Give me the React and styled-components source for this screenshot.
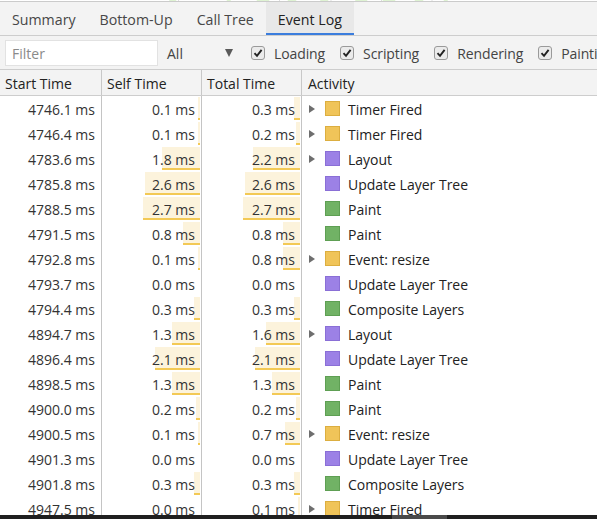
import React from "react";
import styled, { createGlobalStyle } from "styled-components";

const Global = createGlobalStyle`
  html, body { margin: 0; padding: 0; background: #fff; overflow: hidden; }
  body { font-family: "Open Sans", "Noto Sans", sans-serif; }
  * { box-sizing: border-box; }
`;

const Page = styled.div`
  width: 597px;
  height: 519px;
  overflow: hidden;
  display: flex;
  flex-direction: column;
  color: #303030;
  font-size: 13.3px;
  position: relative;
`;

const Strip = styled.svg`
  display: block;
  flex: none;
  border-bottom: 1px solid #cbcbcb;
`;

const TabBar = styled.div`
  flex: none;
  height: 34px;
  background: #f3f3f3;
  border-bottom: 1px solid #cdcdcd;
  display: flex;
  align-items: stretch;
`;

const Tab = styled.div`
  padding: 4px 12px 0;
  display: flex;
  align-items: center;
  font-size: 14.2px;
  color: ${(p) => (p.$active ? "#222" : "#474747")};
  background: ${(p) => (p.$active ? "#e8e8e8" : "transparent")};
  border-bottom: 2px solid ${(p) => (p.$active ? "#3b7ddd" : "transparent")};
  white-space: nowrap;
`;

const Toolbar = styled.div`
  flex: none;
  height: 34px;
  background: #f3f3f3;
  border-bottom: 1px solid #cdcdcd;
  display: flex;
  align-items: center;
  padding-left: 5px;
  padding-top: 1px;
  white-space: nowrap;
  overflow: hidden;
`;

const FilterInput = styled.div`
  width: 153px;
  height: 26px;
  background: #fff;
  border: 1px solid #e2e2e2;
  display: flex;
  align-items: center;
  padding-left: 6px;
  color: #8a8a8a;
  font-size: 14px;
  flex: none;
`;

const Select = styled.div`
  display: flex;
  align-items: center;
  margin-left: 9px;
  width: 84px;
  flex: none;
  font-size: 14px;
  color: #444;
  justify-content: space-between;
`;

const Arrow = styled.span`
  width: 0;
  height: 0;
  border-left: 4.5px solid transparent;
  border-right: 4.5px solid transparent;
  border-top: 8px solid #5a5a5a;
  margin-right: 18px;
`;

const CheckItem = styled.label`
  display: flex;
  align-items: center;
  margin-left: ${(p) => (p.$first ? "0px" : "15px")};
  font-size: 14px;
  letter-spacing: -0.1px;
  color: #444;
  flex: none;
`;

const Box = styled.span`
  width: 14px;
  height: 14px;
  border: 1px solid #9a9a9a;
  border-radius: 3px;
  background: #ebebeb;
  display: flex;
  align-items: center;
  justify-content: center;
  margin-right: 9px;
`;

const Grid = styled.div`
  flex: 1;
  display: flex;
  flex-direction: column;
  overflow: hidden;
`;

const Row = styled.div`
  flex: none;
  display: grid;
  grid-template-columns: 102px 100px 100px 1fr;
  background: ${(p) => (p.$header ? "#f3f3f3" : "#fff")};
  border-bottom: ${(p) => (p.$header ? "1px solid #cdcdcd" : "none")};
  height: ${(p) => (p.$header ? "26px" : "25px")};
`;

const HeadCell = styled.div`
  display: flex;
  align-items: center;
  padding-left: ${(p) => (p.$pad ? p.$pad : "5px")};
  padding-top: 1px;
  border-right: ${(p) => (p.$last ? "none" : "1px solid #c8c8c8")};
  font-size: 14px;
  color: #222;
  white-space: nowrap;
`;

const NumCell = styled.div`
  position: relative;
  display: flex;
  align-items: center;
  justify-content: flex-end;
  padding-right: 6px;
  padding-top: 2px;
  border-right: 1px solid #c4c4c4;
  font-size: 14px;
  color: #333;
  white-space: nowrap;
`;

const Bar = styled.span`
  position: absolute;
  right: 1px;
  top: 1px;
  height: 23px;
  background: #fcf3dc;
  border-bottom: 2px solid #f3c955;
`;

const NumText = styled.span`
  position: relative;
`;

const ActCell = styled.div`
  display: flex;
  align-items: center;
  padding-left: 7px;
  font-size: 14px;
  color: #222;
  white-space: nowrap;
`;

const Toggle = styled.span`
  width: 0;
  height: 0;
  border-top: 4.5px solid transparent;
  border-bottom: 4.5px solid transparent;
  border-left: 6px solid ${(p) => (p.$show ? "#6e6e6e" : "transparent")};
  margin-right: 10px;
  flex: none;
`;

const Swatch = styled.span`
  width: 15px;
  height: 15px;
  flex: none;
  background: ${(p) => p.$fill};
  border: 1px solid ${(p) => p.$line};
  margin-right: 8px;
`;

const Label = styled.span`
  padding-top: 2px;
`;

const Scroll = styled.div`
  position: absolute;
  left: 0;
  right: 0;
  bottom: 0;
  height: 4px;
  background: #1f1f1f;
  display: flex;
`;

const Thumb = styled.span`
  margin-left: 392px;
  width: 55px;
  background: #4a4a4a;
`;

const COLORS = {
  y: ["#f0c459", "#dcae40"],
  p: ["#9c81e6", "#8a6fd6"],
  g: ["#71b265", "#5e9f53"],
};

const rows = [
  ["4746.1", "0.1", "0.3", "Timer Fired", "y", true],
  ["4746.4", "0.1", "0.2", "Timer Fired", "y", true],
  ["4783.6", "1.8", "2.2", "Layout", "p", true],
  ["4785.8", "2.6", "2.6", "Update Layer Tree", "p", false],
  ["4788.5", "2.7", "2.7", "Paint", "g", false],
  ["4791.5", "0.8", "0.8", "Paint", "g", false],
  ["4792.8", "0.1", "0.8", "Event: resize", "y", true],
  ["4793.7", "0.0", "0.0", "Update Layer Tree", "p", false],
  ["4794.4", "0.3", "0.3", "Composite Layers", "g", false],
  ["4894.7", "1.3", "1.6", "Layout", "p", true],
  ["4896.4", "2.1", "2.1", "Update Layer Tree", "p", false],
  ["4898.5", "1.3", "1.3", "Paint", "g", false],
  ["4900.0", "0.2", "0.2", "Paint", "g", false],
  ["4900.5", "0.1", "0.7", "Event: resize", "y", true],
  ["4901.3", "0.0", "0.0", "Update Layer Tree", "p", false],
  ["4901.8", "0.3", "0.3", "Composite Layers", "g", false],
  ["4947.5", "0.0", "0.1", "Timer Fired", "y", true],
];

const SCALE = 21.2;

const Check = () => (
  <svg width="10" height="10" viewBox="0 0 10 10">
    <path d="M1.5 5.2 L4 7.8 L8.6 1.8" fill="none" stroke="#222" strokeWidth="1.9" />
  </svg>
);

const Checkbox = ({ label, first }) => (
  <CheckItem $first={first}>
    <Box>
      <Check />
    </Box>
    {label}
  </CheckItem>
);

const greens = [[40, 14], [155, 8], [215, 25], [277, 17], [342, 16], [412, 24], [467, 25], [531, 17], [589, 8]];
const ticks = [58, 260, 363, 464, 565];

const Num = ({ v, bar }) => {
  const w = Math.round(parseFloat(v) * SCALE);
  return (
    <NumCell>
      {bar && w > 0 && <Bar style={{ width: w }} />}
      <NumText>{v} ms</NumText>
    </NumCell>
  );
};

export default function App() {
  return (
    <Page>
      <Global />
      <Strip width="597" height="2" viewBox="0 0 597 2">
        {greens.map(([x, w]) => (
          <rect key={x} x={x} y="0" width={w} height="2" fill="#dff3d3" />
        ))}
        {ticks.map((x) => (
          <rect key={x} x={x} y="0" width="1" height="2" fill="#bdbdbd" />
        ))}
      </Strip>
      <TabBar>
        <Tab>Summary</Tab>
        <Tab>Bottom-Up</Tab>
        <Tab>Call Tree</Tab>
        <Tab $active>Event Log</Tab>
      </TabBar>
      <Toolbar>
        <FilterInput>Filter</FilterInput>
        <Select>
          All
          <Arrow />
        </Select>
        <Checkbox label="Loading" first />
        <Checkbox label="Scripting" />
        <Checkbox label="Rendering" />
        <Checkbox label="Painting" />
      </Toolbar>
      <Grid>
        <Row $header>
          <HeadCell>Start Time</HeadCell>
          <HeadCell>Self Time</HeadCell>
          <HeadCell>Total Time</HeadCell>
          <HeadCell $last $pad="6px">Activity</HeadCell>
        </Row>
        {rows.map(([st, self, total, name, c, exp], i) => (
          <Row key={i}>
            <Num v={st} />
            <Num v={self} bar />
            <Num v={total} bar />
            <ActCell>
              <Toggle $show={exp} />
              <Swatch $fill={COLORS[c][0]} $line={COLORS[c][1]} />
              <Label>{name}</Label>
            </ActCell>
          </Row>
        ))}
      </Grid>
      <Scroll>
        <Thumb />
      </Scroll>
    </Page>
  );
}
